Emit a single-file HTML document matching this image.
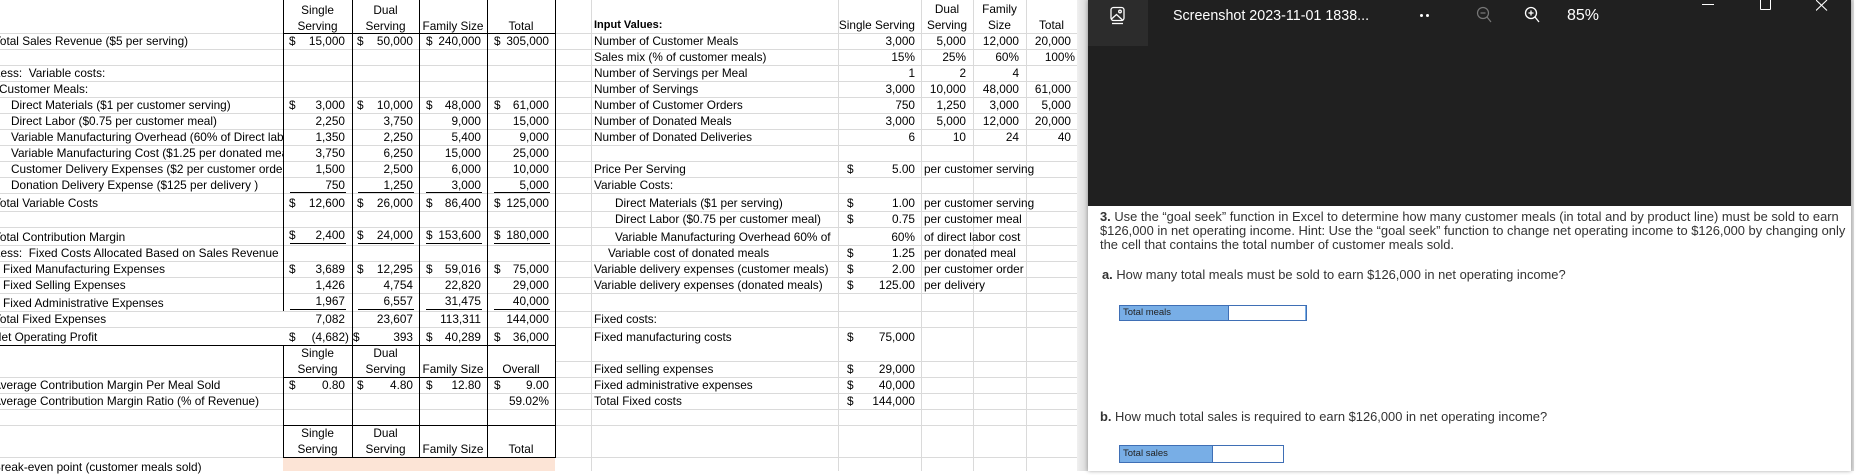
<!DOCTYPE html>
<html><head><meta charset="utf-8"><style>
*{margin:0;padding:0;box-sizing:border-box}
body{width:1861px;height:471px;overflow:hidden;background:#fff;position:relative;font-family:"Liberation Sans",Arial,sans-serif;color:#000}
.c{position:absolute;white-space:nowrap;font-size:11.8px;line-height:16px;height:16px}
.r{text-align:right;width:90px}
.hl{position:absolute;height:1px;background:#dadada}
.vl{position:absolute;width:1px;background:#dadada}
.bk{background:#000}
.B{left:255px}.C{left:323px}.D{left:391px}.E{left:459px}
.dB{left:289px}.dC{left:357px}.dD{left:426px}.dE{left:494px}
.H{left:825px}.I{left:876px}.J{left:929px}.K{left:981px}
.md{left:847px}
.ctr{text-align:center}
.q{position:absolute;left:1100px;font-size:12.9px;color:#333;white-space:nowrap}
</style></head><body>

<div class="hl" style="top:33px;left:0;width:1077px"></div>
<div class="hl" style="top:49px;left:0;width:1077px"></div>
<div class="hl" style="top:65px;left:0;width:1077px"></div>
<div class="hl" style="top:81px;left:0;width:1077px"></div>
<div class="hl" style="top:97px;left:0;width:1077px"></div>
<div class="hl" style="top:113px;left:0;width:1077px"></div>
<div class="hl" style="top:129px;left:0;width:1077px"></div>
<div class="hl" style="top:145px;left:0;width:1077px"></div>
<div class="hl" style="top:161px;left:0;width:1077px"></div>
<div class="hl" style="top:177px;left:0;width:1077px"></div>
<div class="hl" style="top:193px;left:0;width:1077px"></div>
<div class="hl" style="top:211px;left:0;width:1077px"></div>
<div class="hl" style="top:227px;left:0;width:1077px"></div>
<div class="hl" style="top:245px;left:0;width:1077px"></div>
<div class="hl" style="top:261px;left:0;width:1077px"></div>
<div class="hl" style="top:277px;left:0;width:1077px"></div>
<div class="hl" style="top:293px;left:0;width:1077px"></div>
<div class="hl" style="top:311px;left:0;width:1077px"></div>
<div class="hl" style="top:327px;left:0;width:1077px"></div>
<div class="hl" style="top:361px;left:555px;width:522px"></div>
<div class="hl" style="top:377px;left:0;width:1077px"></div>
<div class="hl" style="top:393px;left:0;width:1077px"></div>
<div class="hl" style="top:409px;left:0;width:1077px"></div>
<div class="hl" style="top:425px;left:0;width:1077px"></div>
<div class="hl" style="top:457px;left:0;width:1077px"></div>
<div class="vl" style="left:591px;top:0;height:471px"></div>
<div class="vl" style="left:838px;top:0;height:471px"></div>
<div class="vl" style="left:921px;top:0;height:471px"></div>
<div class="vl" style="left:973px;top:0;height:471px"></div>
<div class="vl" style="left:1026px;top:0;height:471px"></div>

<div style="position:absolute;left:283px;top:458px;width:272px;height:13px;background:#fce4d6"></div>

<div class="vl bk" style="left:283px;top:0;height:311px"></div>
<div class="vl bk" style="left:283px;top:345px;height:112px"></div>
<div class="vl bk" style="left:352px;top:0;height:457px"></div>
<div class="vl bk" style="left:419px;top:0;height:457px"></div>
<div class="vl bk" style="left:487px;top:0;height:457px"></div>
<div class="vl bk" style="left:555px;top:0;height:457px"></div>
<div class="hl bk" style="top:33px;left:283px;width:273px"></div>
<div class="hl bk" style="top:345px;left:0;width:556px"></div>
<div class="hl bk" style="top:377px;left:283px;width:273px"></div>
<div class="hl bk" style="top:425px;left:283px;width:273px"></div>
<div class="hl bk" style="top:457px;left:283px;width:273px"></div>
<div class="hl bk" style="top:192px;left:290px;width:56px"></div>
<div class="hl bk" style="top:192px;left:358px;width:56px"></div>
<div class="hl bk" style="top:192px;left:426px;width:56px"></div>
<div class="hl bk" style="top:192px;left:494px;width:56px"></div>
<div class="hl bk" style="top:243px;left:290px;width:56px"></div>
<div class="hl bk" style="top:243px;left:358px;width:56px"></div>
<div class="hl bk" style="top:243px;left:426px;width:56px"></div>
<div class="hl bk" style="top:243px;left:494px;width:56px"></div>
<div class="hl bk" style="top:309px;left:290px;width:56px"></div>
<div class="hl bk" style="top:309px;left:358px;width:56px"></div>
<div class="hl bk" style="top:309px;left:426px;width:56px"></div>
<div class="hl bk" style="top:309px;left:494px;width:56px"></div>

<div class="c ctr" style="left:283px;width:69px;top:2px">Single</div>
<div class="c ctr" style="left:283px;width:69px;top:18px">Serving</div>
<div class="c ctr" style="left:352px;width:67px;top:2px">Dual</div>
<div class="c ctr" style="left:352px;width:67px;top:18px">Serving</div>
<div class="c ctr" style="left:419px;width:68px;top:18px">Family Size</div>
<div class="c ctr" style="left:487px;width:68px;top:18px">Total</div>

<div class="c" style="left:-6px;top:33px">Total Sales Revenue ($5 per serving)</div>
<div class="c" style="left:-6px;top:65px">Less:&nbsp; Variable costs:</div>
<div class="c" style="left:-1px;top:81px">Customer Meals:</div>
<div class="c" style="left:11px;top:97px">Direct Materials ($1 per customer serving)</div>
<div class="c" style="left:11px;top:113px">Direct Labor ($0.75 per customer meal)</div>
<div class="c" style="left:11px;top:129px;width:272px;overflow:hidden">Variable Manufacturing Overhead (60% of Direct labor)</div>
<div class="c" style="left:11px;top:145px;width:272px;overflow:hidden">Variable Manufacturing Cost ($1.25 per donated meal)</div>
<div class="c" style="left:11px;top:161px;width:272px;overflow:hidden">Customer Delivery Expenses ($2 per customer order)</div>
<div class="c" style="left:11px;top:177px">Donation Delivery Expense ($125 per delivery )</div>
<div class="c" style="left:-6px;top:195px">Total Variable Costs</div>
<div class="c" style="left:-6px;top:229px">Total Contribution Margin</div>
<div class="c" style="left:-6px;top:245px">Less:&nbsp; Fixed Costs Allocated Based on Sales Revenue</div>
<div class="c" style="left:3px;top:261px">Fixed Manufacturing Expenses</div>
<div class="c" style="left:3px;top:277px">Fixed Selling Expenses</div>
<div class="c" style="left:3px;top:295px">Fixed Administrative Expenses</div>
<div class="c" style="left:-6px;top:311px">Total Fixed Expenses</div>
<div class="c" style="left:-7px;top:329px">Net Operating Profit</div>
<div class="c" style="left:-7px;top:377px">Average Contribution Margin Per Meal Sold</div>
<div class="c" style="left:-7px;top:393px">Average Contribution Margin Ratio (% of Revenue)</div>
<div class="c" style="left:-7px;top:459px">Break-even point (customer meals sold)</div>

<div class="c dB" style="top:33px">$</div><div class="c r B" style="top:33px">15,000</div>
<div class="c dC" style="top:33px">$</div><div class="c r C" style="top:33px">50,000</div>
<div class="c dD" style="top:33px">$</div><div class="c r D" style="top:33px">240,000</div>
<div class="c dE" style="top:33px">$</div><div class="c r E" style="top:33px">305,000</div>

<div class="c dB" style="top:97px">$</div><div class="c r B" style="top:97px">3,000</div>
<div class="c dC" style="top:97px">$</div><div class="c r C" style="top:97px">10,000</div>
<div class="c dD" style="top:97px">$</div><div class="c r D" style="top:97px">48,000</div>
<div class="c dE" style="top:97px">$</div><div class="c r E" style="top:97px">61,000</div>
<div class="c r B" style="top:113px">2,250</div><div class="c r C" style="top:113px">3,750</div><div class="c r D" style="top:113px">9,000</div><div class="c r E" style="top:113px">15,000</div>
<div class="c r B" style="top:129px">1,350</div><div class="c r C" style="top:129px">2,250</div><div class="c r D" style="top:129px">5,400</div><div class="c r E" style="top:129px">9,000</div>
<div class="c r B" style="top:145px">3,750</div><div class="c r C" style="top:145px">6,250</div><div class="c r D" style="top:145px">15,000</div><div class="c r E" style="top:145px">25,000</div>
<div class="c r B" style="top:161px">1,500</div><div class="c r C" style="top:161px">2,500</div><div class="c r D" style="top:161px">6,000</div><div class="c r E" style="top:161px">10,000</div>
<div class="c r B" style="top:177px">750</div><div class="c r C" style="top:177px">1,250</div><div class="c r D" style="top:177px">3,000</div><div class="c r E" style="top:177px">5,000</div>

<div class="c dB" style="top:195px">$</div><div class="c r B" style="top:195px">12,600</div>
<div class="c dC" style="top:195px">$</div><div class="c r C" style="top:195px">26,000</div>
<div class="c dD" style="top:195px">$</div><div class="c r D" style="top:195px">86,400</div>
<div class="c dE" style="top:195px">$</div><div class="c r E" style="top:195px">125,000</div>

<div class="c dB" style="top:227px">$</div><div class="c r B" style="top:227px">2,400</div>
<div class="c dC" style="top:227px">$</div><div class="c r C" style="top:227px">24,000</div>
<div class="c dD" style="top:227px">$</div><div class="c r D" style="top:227px">153,600</div>
<div class="c dE" style="top:227px">$</div><div class="c r E" style="top:227px">180,000</div>

<div class="c dB" style="top:261px">$</div><div class="c r B" style="top:261px">3,689</div>
<div class="c dC" style="top:261px">$</div><div class="c r C" style="top:261px">12,295</div>
<div class="c dD" style="top:261px">$</div><div class="c r D" style="top:261px">59,016</div>
<div class="c dE" style="top:261px">$</div><div class="c r E" style="top:261px">75,000</div>
<div class="c r B" style="top:277px">1,426</div><div class="c r C" style="top:277px">4,754</div><div class="c r D" style="top:277px">22,820</div><div class="c r E" style="top:277px">29,000</div>
<div class="c r B" style="top:293px">1,967</div><div class="c r C" style="top:293px">6,557</div><div class="c r D" style="top:293px">31,475</div><div class="c r E" style="top:293px">40,000</div>
<div class="c r B" style="top:311px">7,082</div><div class="c r C" style="top:311px">23,607</div><div class="c r D" style="top:311px">113,311</div><div class="c r E" style="top:311px">144,000</div>
<div class="c dB" style="top:329px">$</div><div class="c r B" style="top:329px;left:259px">(4,682)</div>
<div class="c dC" style="top:329px;left:353px">$</div><div class="c r C" style="top:329px">393</div>
<div class="c dD" style="top:329px">$</div><div class="c r D" style="top:329px">40,289</div>
<div class="c dE" style="top:329px">$</div><div class="c r E" style="top:329px">36,000</div>

<div class="c ctr" style="left:283px;width:69px;top:345px">Single</div>
<div class="c ctr" style="left:283px;width:69px;top:361px">Serving</div>
<div class="c ctr" style="left:352px;width:67px;top:345px">Dual</div>
<div class="c ctr" style="left:352px;width:67px;top:361px">Serving</div>
<div class="c ctr" style="left:419px;width:68px;top:361px">Family Size</div>
<div class="c ctr" style="left:487px;width:68px;top:361px">Overall</div>

<div class="c dB" style="top:377px">$</div><div class="c r B" style="top:377px">0.80</div>
<div class="c dC" style="top:377px">$</div><div class="c r C" style="top:377px">4.80</div>
<div class="c dD" style="top:377px">$</div><div class="c r D" style="top:377px">12.80</div>
<div class="c dE" style="top:377px">$</div><div class="c r E" style="top:377px">9.00</div>
<div class="c r E" style="top:393px">59.02%</div>

<div class="c ctr" style="left:283px;width:69px;top:425px">Single</div>
<div class="c ctr" style="left:283px;width:69px;top:441px">Serving</div>
<div class="c ctr" style="left:352px;width:67px;top:425px">Dual</div>
<div class="c ctr" style="left:352px;width:67px;top:441px">Serving</div>
<div class="c ctr" style="left:419px;width:68px;top:441px">Family Size</div>
<div class="c ctr" style="left:487px;width:68px;top:441px">Total</div>

<div class="c" style="left:594px;top:17px;font-weight:bold;font-size:11px">Input Values:</div>
<div class="c r H" style="top:17px">Single Serving</div>
<div class="c ctr" style="left:921px;width:52px;top:1px">Dual</div>
<div class="c ctr" style="left:921px;width:52px;top:17px">Serving</div>
<div class="c ctr" style="left:973px;width:53px;top:1px">Family</div>
<div class="c ctr" style="left:973px;width:53px;top:17px">Size</div>
<div class="c ctr" style="left:1026px;width:51px;top:17px">Total</div>

<div class="c" style="left:594px;top:33px">Number of Customer Meals</div>
<div class="c r H" style="top:33px">3,000</div><div class="c r I" style="top:33px">5,000</div><div class="c r J" style="top:33px">12,000</div><div class="c r K" style="top:33px">20,000</div>
<div class="c" style="left:594px;top:49px">Sales mix (% of customer meals)</div>
<div class="c r H" style="top:49px">15%</div><div class="c r I" style="top:49px">25%</div><div class="c r J" style="top:49px">60%</div><div class="c r K" style="top:49px;left:985px">100%</div>
<div class="c" style="left:594px;top:65px">Number of Servings per Meal</div>
<div class="c r H" style="top:65px">1</div><div class="c r I" style="top:65px">2</div><div class="c r J" style="top:65px">4</div>
<div class="c" style="left:594px;top:81px">Number of Servings</div>
<div class="c r H" style="top:81px">3,000</div><div class="c r I" style="top:81px">10,000</div><div class="c r J" style="top:81px">48,000</div><div class="c r K" style="top:81px">61,000</div>
<div class="c" style="left:594px;top:97px">Number of Customer Orders</div>
<div class="c r H" style="top:97px">750</div><div class="c r I" style="top:97px">1,250</div><div class="c r J" style="top:97px">3,000</div><div class="c r K" style="top:97px">5,000</div>
<div class="c" style="left:594px;top:113px">Number of Donated Meals</div>
<div class="c r H" style="top:113px">3,000</div><div class="c r I" style="top:113px">5,000</div><div class="c r J" style="top:113px">12,000</div><div class="c r K" style="top:113px">20,000</div>
<div class="c" style="left:594px;top:129px">Number of Donated Deliveries</div>
<div class="c r H" style="top:129px">6</div><div class="c r I" style="top:129px">10</div><div class="c r J" style="top:129px">24</div><div class="c r K" style="top:129px">40</div>

<div class="c" style="left:594px;top:161px">Price Per Serving</div>
<div class="c md" style="top:161px">$</div><div class="c r H" style="top:161px">5.00</div><div class="c" style="left:924px;top:161px">per customer serving</div>
<div class="c" style="left:594px;top:177px">Variable Costs:</div>
<div class="c" style="left:615px;top:195px">Direct Materials ($1 per serving)</div>
<div class="c md" style="top:195px">$</div><div class="c r H" style="top:195px">1.00</div><div class="c" style="left:924px;top:195px">per customer serving</div>
<div class="c" style="left:615px;top:211px">Direct Labor ($0.75 per customer meal)</div>
<div class="c md" style="top:211px">$</div><div class="c r H" style="top:211px">0.75</div><div class="c" style="left:924px;top:211px">per customer meal</div>
<div class="c" style="left:615px;top:229px;width:223px;overflow:hidden">Variable Manufacturing Overhead 60% of</div>
<div class="c r H" style="top:229px">60%</div><div class="c" style="left:924px;top:229px">of direct labor cost</div>
<div class="c" style="left:608px;top:245px">Variable cost of donated meals</div>
<div class="c md" style="top:245px">$</div><div class="c r H" style="top:245px">1.25</div><div class="c" style="left:924px;top:245px">per donated meal</div>
<div class="c" style="left:594px;top:261px;width:244px;overflow:hidden">Variable delivery expenses (customer meals)</div>
<div class="c md" style="top:261px">$</div><div class="c r H" style="top:261px">2.00</div><div class="c" style="left:924px;top:261px">per customer order</div>
<div class="c" style="left:594px;top:277px;width:244px;overflow:hidden">Variable delivery expenses (donated meals)</div>
<div class="c md" style="top:277px">$</div><div class="c r H" style="top:277px">125.00</div><div class="c" style="left:924px;top:277px">per delivery</div>
<div class="c" style="left:594px;top:311px">Fixed costs:</div>
<div class="c" style="left:594px;top:329px">Fixed manufacturing costs</div>
<div class="c md" style="top:329px">$</div><div class="c r H" style="top:329px">75,000</div>
<div class="c" style="left:594px;top:361px">Fixed selling expenses</div>
<div class="c md" style="top:361px">$</div><div class="c r H" style="top:361px">29,000</div>
<div class="c" style="left:594px;top:377px">Fixed administrative expenses</div>
<div class="c md" style="top:377px">$</div><div class="c r H" style="top:377px">40,000</div>
<div class="c" style="left:594px;top:393px">Total Fixed costs</div>
<div class="c md" style="top:393px">$</div><div class="c r H" style="top:393px">144,000</div>

<div style="position:absolute;left:1077px;top:0;width:11px;height:471px;background:linear-gradient(90deg,#f0f0f0,#d8d8d8)"></div>
<div style="position:absolute;left:1851px;top:0;width:10px;height:471px;background:#fff;border-left:3px solid #dcdcdc"></div>

<div style="position:absolute;left:1088px;top:0;width:763px;height:471px;background:#fff;box-shadow:0 0 4px rgba(0,0,0,.35)">
  <div style="position:absolute;left:0;top:0;width:763px;height:206px;background:#202020"></div>
  <div style="position:absolute;left:0;top:0;width:60px;height:46px;background:#2c2c2c"></div>
  <svg style="position:absolute;left:21px;top:6px" width="18" height="20" viewBox="0 0 18 20" fill="none" stroke="#fff" stroke-width="1.3">
    <rect x="2" y="1.5" width="13" height="13" rx="2.5"/>
    <path d="M3 17.5h11"/>
    <path d="M2.5 13l5-4.5 6 5.5"/>
    <circle cx="11" cy="5.5" r="1.3"/>
  </svg>
  <div style="position:absolute;left:85px;top:8px;color:#fff;font-size:14.3px;white-space:nowrap">Screenshot 2023-11-01 1838...</div>
  <div style="position:absolute;left:332px;top:14px;width:3px;height:3px;border-radius:2px;background:#fff"></div>
  <div style="position:absolute;left:338px;top:14px;width:3px;height:3px;border-radius:2px;background:#fff"></div>
  <svg style="position:absolute;left:388px;top:6px" width="16" height="18" viewBox="0 0 16 18" fill="none" stroke="#777" stroke-width="1.2">
    <circle cx="7" cy="7" r="5.5"/><path d="M4.5 7h5M11 11l4 5"/>
  </svg>
  <svg style="position:absolute;left:436px;top:6px" width="16" height="18" viewBox="0 0 16 18" fill="none" stroke="#fff" stroke-width="1.3">
    <circle cx="7" cy="7" r="5.5"/><path d="M4.5 7h5M7 4.5v5M11 11l4 5"/>
  </svg>
  <div style="position:absolute;left:479px;top:7px;color:#fff;font-size:16px;white-space:nowrap">85%</div>
  <div style="position:absolute;left:614px;top:4px;width:12px;height:1px;background:#fff"></div>
  <div style="position:absolute;left:672px;top:-2px;width:11px;height:12px;border:1px solid #fff;border-radius:1px"></div>
  <svg style="position:absolute;left:728px;top:0" width="12" height="11" viewBox="0 0 12 11" stroke="#fff" stroke-width="1.1"><path d="M0 0l11 10.5M11 0L0 10.5"/></svg>

  <div class="q" style="left:12px;top:209px"><b>3.</b> Use the “goal seek” function in Excel to determine how many customer meals (in total and by product line) must be sold to earn</div>
  <div class="q" style="left:12px;top:223px">$126,000 in net operating income. Hint: Use the “goal seek” function to change net operating income to $126,000 by changing only</div>
  <div class="q" style="left:12px;top:237px">the cell that contains the total number of customer meals sold.</div>
  <div class="q" style="left:14px;top:267px"><b>a.</b> How many total meals must be sold to earn $126,000 in net operating income?</div>
  <div style="position:absolute;left:31px;top:305px;width:188px;height:16px;background:#78aee6;border:1px solid #3f6fb5">
    <span style="position:absolute;left:3px;top:1px;font-size:9.5px;color:#222">Total meals</span>
    <div style="position:absolute;left:108px;top:0;width:77px;height:14px;background:#fff;border-left:1px solid #3f6fb5"></div>
  </div>
  <div class="q" style="left:12px;top:409px"><b>b.</b> How much total sales is required to earn $126,000 in net operating income?</div>
  <div style="position:absolute;left:31px;top:445px;width:165px;height:18px;background:#78aee6;border:1px solid #3f6fb5">
    <span style="position:absolute;left:3px;top:2px;font-size:9.5px;color:#222">Total sales</span>
    <div style="position:absolute;left:92px;top:0;width:71px;height:16px;background:#fff;border-left:1px solid #3f6fb5"></div>
  </div>
</div>
</body></html>
